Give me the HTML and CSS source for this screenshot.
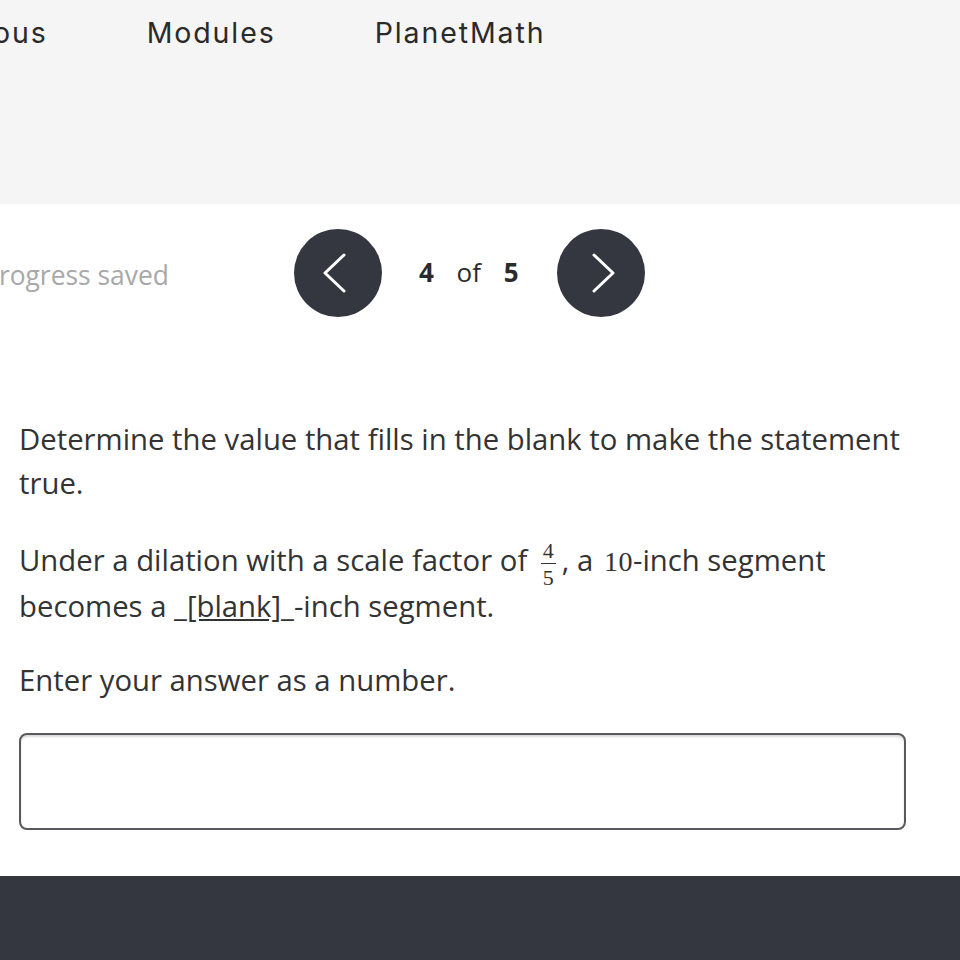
FILE: index.html
```html
<!DOCTYPE html>
<html>
<head>
<meta charset="utf-8">
<link rel="stylesheet" href="styles.css">
</head>
<body>
<header class="topbar">
  <nav class="nav">
    <a class="nav-item nav-prev">Previous</a>
    <a class="nav-item">Modules</a>
    <a class="nav-item">PlanetMath</a>
  </nav>
</header>
<main class="main">
  <div class="progress-row">
    <span class="saved">Progress saved</span>
    <button class="circle" aria-label="previous">
      <svg width="88" height="88" viewBox="0 0 88 88"><path d="M50 26 L31 44 L50 62" fill="none" stroke="#fff" stroke-width="3" stroke-linecap="round" stroke-linejoin="round"/></svg>
    </button>
    <span class="counter"><b>4</b> of <b>5</b></span>
    <button class="circle" aria-label="next">
      <svg width="88" height="88" viewBox="0 0 88 88"><path d="M37 26 L56 44 L37 62" fill="none" stroke="#fff" stroke-width="3" stroke-linecap="round" stroke-linejoin="round"/></svg>
    </button>
  </div>
  <section class="question">
    <p class="p-first">Determine the value that fills in the blank to make the statement true.</p>
    <p>Under a dilation with a scale factor of <span class="frac"><span class="num">4</span><span class="den">5</span></span>, a <span class="m">10</span>-inch segment becomes a _<u>[blank]</u>_-inch segment.</p>
    <p>Enter your answer as a number.</p>
    <div class="answer"></div>
  </section>
</main>
<footer class="footer"></footer>
</body>
</html>
```
FILE: styles.css
```css
html, body {
  margin: 0;
  padding: 0;
  background: #ffffff;
  overflow: hidden;
}
body {
  width: 960px;
  height: 960px;
  display: flex;
  flex-direction: column;
}
.topbar {
  background: #f5f5f5;
  height: 204px;
  flex: none;
}
.nav {
  display: flex;
  gap: 99px;
  margin-left: -84px;
  padding-top: 15px;
}
.nav-item {
  font-family: "Inter", "DejaVu Sans", sans-serif;
  font-size: 28.5px;
  color: #2a2a2a;
  letter-spacing: 1.9px;
}
.main {
  flex: 1;
}
.progress-row {
  display: flex;
  align-items: center;
  margin-top: 25px;
  margin-left: -17px;
  font-family: "Open Sans", sans-serif;
}
.saved {
  font-size: 26.4px;
  color: #a8a8a8;
  margin-right: 125px;
  padding-top: 4px;
}
.circle {
  width: 88px;
  height: 88px;
  border-radius: 50%;
  background: #353740;
  border: none;
  padding: 0;
  display: flex;
  align-items: center;
  justify-content: center;
  flex: none;
}
.counter {
  font-size: 26px;
  color: #2b2b2b;
  margin: 0 38px 0 37px;
  word-spacing: 16px;
  padding-bottom: 3px;
}
.counter b {
  font-weight: 700;
}
.question {
  padding: 100px 54px 0 19px;
  font-family: "Open Sans", sans-serif;
  font-size: 29.3px;
  line-height: 44px;
  color: #333333;
}
.question p {
  margin: 0 0 30px 0;
}
.question .p-first {
  margin-bottom: 33px;
}
.frac {
  display: inline-flex;
  flex-direction: column;
  vertical-align: middle;
  font-family: "Liberation Serif", serif;
  font-size: 22px;
  text-align: center;
  margin: -8px 6px 0 6px;
  position: relative;
  top: 5px;
}
.num {
  border-bottom: 1px solid #333;
  padding: 0 2px 2px 2px;
  line-height: 21px;
}
.den {
  line-height: 23px;
  padding-top: 2px;
}
.m {
  font-family: "Liberation Serif", serif;
  font-size: 28px;
  letter-spacing: 0.5px;
  margin-left: 3px;
}
.answer {
  margin-top: 31px;
  width: 883px;
  height: 93px;
  border: 2px solid #58595e;
  border-radius: 8px;
  box-shadow: inset 0 2px 2px rgba(0,0,0,0.15);
}
.footer {
  height: 84px;
  background: #353740;
  flex: none;
}
```
